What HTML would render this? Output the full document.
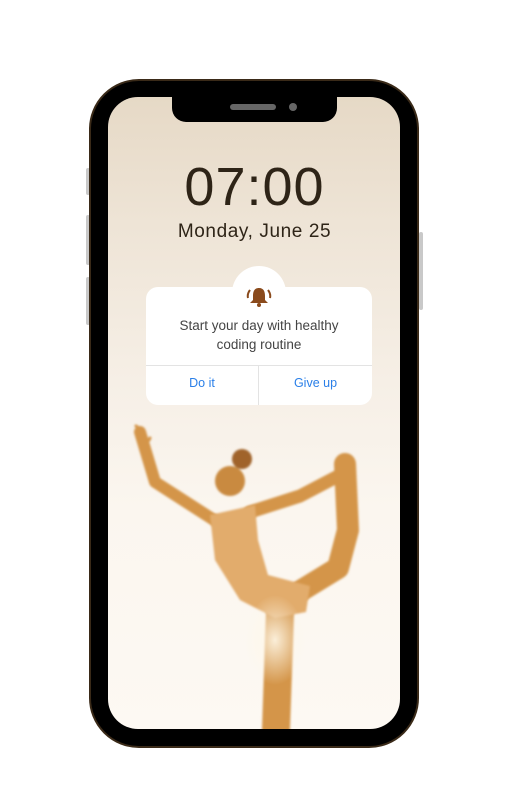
<!DOCTYPE html>
<html><head><style>
html,body{margin:0;padding:0;background:#fff;width:509px;height:793px;overflow:hidden;font-family:"Liberation Sans",sans-serif}
.btn{position:absolute;background:#c9c9c9;border-radius:2px}
.phone{position:absolute;left:89px;top:79px;width:326px;height:665px;border:2px solid #3a2a18;border-radius:50px;background:#000}
.screen{position:absolute;left:108px;top:97px;width:292px;height:632px;border-radius:30px;overflow:hidden;
background:linear-gradient(180deg,#e6d9c6 0%,#eee4d6 20%,#f6efe6 45%,#fbf6ef 65%,#fdf9f3 100%)}
.notch{position:absolute;left:172px;top:96px;width:165px;height:26px;background:#000;border-radius:0 0 14px 14px}
.time{position:absolute;left:0;width:509px;text-align:center;color:#2e2417}
.card{position:absolute;left:146px;top:287px;width:226px;height:118px;background:#fff;border-radius:12px}
.bubble{position:absolute;left:232px;top:266px;width:54px;height:54px;border-radius:50%;background:#fff}
</style></head><body>
<div class="btn" style="left:86px;top:168px;width:4px;height:27px"></div>
<div class="btn" style="left:86px;top:215px;width:4px;height:50px"></div>
<div class="btn" style="left:86px;top:277px;width:4px;height:48px"></div>
<div class="btn" style="left:419px;top:232px;width:4px;height:78px"></div>
<div class="phone"></div>
<div class="screen">
<svg width="292" height="632" viewBox="108 97 292 632" style="position:absolute;left:0;top:0">
<defs><filter id="b"><feGaussianBlur stdDeviation="1"/></filter>
<radialGradient id="g" cx="0.5" cy="0.5" r="0.5"><stop offset="0" stop-color="#fff8e8" stop-opacity="0.9"/><stop offset="1" stop-color="#fff8e8" stop-opacity="0"/></radialGradient></defs>
<g filter="url(#b)" stroke-linecap="round" stroke-linejoin="round" fill="none" stroke="#d4954a">
<polyline points="140,432 155,482 214,520" stroke-width="12"/>
<polyline points="250,512 300,496 342,474" stroke-width="13"/>
<polyline points="345,464 348,530 338,568 302,590" stroke-width="22"/>
<polyline points="280,612 276,729" stroke-width="28"/>
<path d="M136,426 L142,430 M144,432 A5,5 0 1,0 150,438" stroke-width="3"/>
</g>
<g filter="url(#b)">
<path d="M210,515 L255,505 L258,540 L268,575 L310,586 L306,612 L275,618 L240,600 L215,560 Z" fill="#e2ac6c"/>
<circle cx="230" cy="481" r="15" fill="#c98a40"/>
<circle cx="242" cy="459" r="10" fill="#a0642c"/>
</g>
<ellipse cx="275" cy="640" rx="30" ry="45" fill="url(#g)"/>
</svg>
</div>
<div class="notch"></div>
<div style="position:absolute;left:230px;top:104px;width:46px;height:6px;border-radius:3px;background:#666"></div>
<div style="position:absolute;left:289px;top:103px;width:8px;height:8px;border-radius:50%;background:#666"></div>
<div class="time" style="top:156px;font-size:54px;line-height:62px;letter-spacing:1px">07:00</div>
<div class="time" style="top:220px;font-size:19px;line-height:24px;letter-spacing:0.6px">Monday, June 25</div>
<div class="bubble"></div>
<div class="card"></div>
<svg style="position:absolute;left:246px;top:285px" width="26" height="24" viewBox="0 0 26 24">
<path d="M13,3 C8,3 7,7 7,11 L7,15 L4,18 L22,18 L19,15 L19,11 C19,7 18,3 13,3 Z" fill="#8a4a1c"/>
<circle cx="13" cy="20" r="2" fill="#8a4a1c"/>
<path d="M4,5 Q1,9 2,13 M22,5 Q25,9 24,13" stroke="#8a4a1c" stroke-width="2" fill="none"/>
</svg>
<div style="position:absolute;left:146px;width:226px;top:316px;text-align:center;font-size:13.5px;line-height:19px;color:#444">Start your day with healthy<br>coding routine</div>
<div style="position:absolute;left:146px;top:365px;width:226px;height:1px;background:#e3e3e3"></div>
<div style="position:absolute;left:258px;top:366px;width:1px;height:39px;background:#e3e3e3"></div>
<div style="position:absolute;left:146px;width:112px;top:376px;text-align:center;font-size:12.5px;color:#2a7fe8">Do it</div>
<div style="position:absolute;left:259px;width:113px;top:376px;text-align:center;font-size:12.5px;color:#2a7fe8">Give up</div>
</body></html>
